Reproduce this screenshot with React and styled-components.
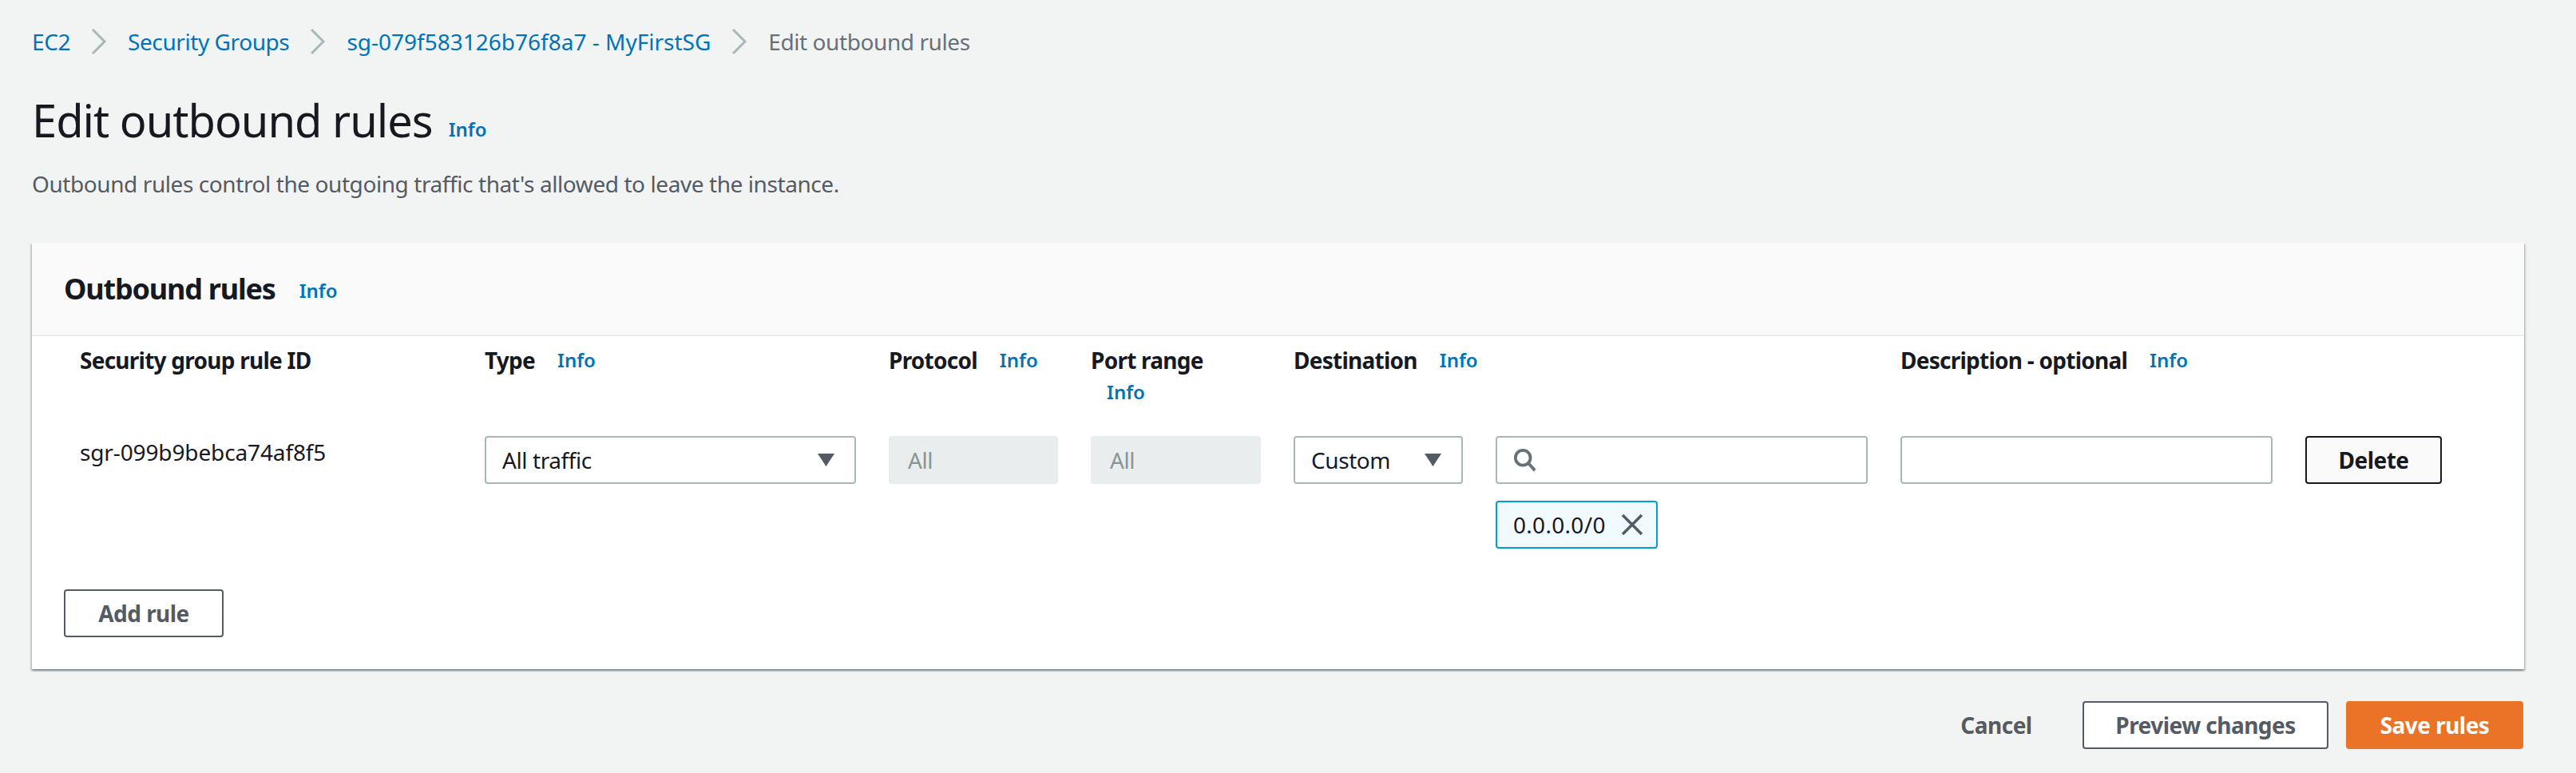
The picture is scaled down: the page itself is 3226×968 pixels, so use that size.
import React from "react";
import styled, { createGlobalStyle } from "styled-components";

const Global = createGlobalStyle`
  html, body { margin: 0; padding: 0; background: #f2f3f3; }
  body { font-family: "Noto Sans", "Liberation Sans", sans-serif; color: #16191f; }
  * { box-sizing: border-box; }
`;

const Page = styled.div`
  width: 3226px;
  height: 968px;
  padding: 0 65px 0 40px;
  background: #f2f3f3;
  overflow: hidden;
`;
const text = `font-size: 28px; letter-spacing: -0.42px; line-height: 40px;`;

const Crumbs = styled.nav`
  display: flex;
  align-items: center;
  height: 40px;
  margin-top: 32px;
  gap: 25px;
  ${text}
`;
const Crumb = styled.a`
  color: ${(p) => (p.$current ? "#687078" : "#0073bb")};
  letter-spacing: ${(p) => (p.$id ? "0" : "-0.42px")};
  white-space: nowrap;
`;
const Chev = styled.svg`
  width: 22px;
  height: 32px;
  flex: none;
`;
const TitleRow = styled.div`
  display: flex;
  align-items: center;
  gap: 20px;
  margin-top: 46px;
`;
const Title = styled.h1`
  margin: 0;
  font-size: 56px;
  font-weight: 400;
  letter-spacing: -1px;
  line-height: 64px;
`;
const Info = styled.a`
  color: #0073bb;
  font-size: 24px;
  font-weight: 600;
  letter-spacing: 0;
  line-height: 40px;
  white-space: nowrap;
  margin-top: ${(p) => p.$drop || 0}px;
`;
const Lead = styled.p`
  margin: 28px 0 0;
  color: #545b64;
  ${text}
`;
const Card = styled.section`
  margin-top: 54px;
  height: 534px;
  background: #fff;
  box-shadow: 0 2px 2px 0 rgba(0, 28, 36, 0.3), 2px 2px 2px 0 rgba(0, 28, 36, 0.15), -2px 2px 2px 0 rgba(0, 28, 36, 0.15);
  display: flex;
  flex-direction: column;
`;
const CardHead = styled.header`
  height: 117px;
  flex: none;
  background: #fafafa;
  border-bottom: 2px solid #eaeded;
  display: flex;
  align-items: center;
  padding-left: 40px;
  gap: 30px;
`;
const CardTitle = styled.h2`
  margin: 0;
  font-size: 36px;
  font-weight: 700;
  letter-spacing: -1.2px;
  line-height: 40px;
`;
const Rules = styled.div`
  display: grid;
  grid-template-columns: 466px 465px 212px 213px 212px 466px 466px 171px;
  column-gap: 41px;
  padding: 10px 0 0 60px;
`;
const HeadCell = styled.div`
  display: flex;
  flex-wrap: ${(p) => (p.$wrap ? "wrap" : "nowrap")};
  align-items: flex-start;
  align-content: flex-start;
  column-gap: 28px;
  height: 115px;
  font-size: 28px;
  font-weight: 700;
  letter-spacing: -0.75px;
  line-height: 40px;
  white-space: nowrap;
`;
const Wrapped = styled(Info)`
  flex-basis: 100%;
  padding-left: 20px;
`;
const RuleId = styled.div`
  ${text}
  letter-spacing: -0.13px;
`;
const Field = styled.div`
  height: 60px;
  border: 2px solid #aab7b8;
  border-radius: 4px;
  background: #fff;
  display: flex;
  align-items: center;
  padding: 0 25px 0 20px;
  justify-content: space-between;
  ${text}
`;
const Disabled = styled(Field)`
  background: #eaeded;
  border-color: #eaeded;
  color: #879596;
  padding-left: 22px;
`;
const Search = styled(Field)`
  justify-content: flex-start;
`;
const Token = styled.div`
  margin-top: 21px;
  width: 203px;
  height: 60px;
  background: #f1faff;
  border: 2px solid #00a1c9;
  border-radius: 4px;
  display: flex;
  align-items: center;
  justify-content: space-between;
  padding: 0 16px 0 20px;
  ${text}
  letter-spacing: 0.3px;
`;
const Button = styled.button`
  width: ${(p) => p.$w || 171}px;
  height: 60px;
  border-radius: 4px;
  font-family: inherit;
  font-size: 28px;
  font-weight: 700;
  letter-spacing: -0.53px;
  padding: 0;
  background: ${(p) => p.$bg || "#fff"};
  border: 2px solid ${(p) => p.$line || "#545b64"};
  color: ${(p) => p.$ink || "#545b64"};
`;
const AddRow = styled.div`
  padding: 0 0 0 40px;
  margin-top: 51px;
`;
const Footer = styled.footer`
  margin-top: 40px;
  padding-right: 1px;
  display: flex;
  justify-content: flex-end;
  align-items: center;
  gap: 22px;
`;
const Ghost = styled(Button)`
  border-color: transparent;
  background: transparent;
`;

const Chevron = () => (
  <Chev viewBox="0 0 22 32" fill="none">
    <path d="M3 1 L18 16 L3 31" stroke="#aab7b8" strokeWidth="3" />
  </Chev>
);
const Caret = () => (
  <svg width="21" height="16" viewBox="0 0 21 16">
    <path d="M0 0 H21 L10.5 16 Z" fill="#545b64" />
  </svg>
);

export default function App() {
  return (
    <Page>
      <Global />
      <Crumbs>
        <Crumb>EC2</Crumb>
        <Chevron />
        <Crumb>Security Groups</Crumb>
        <Chevron />
        <Crumb $id>sg-079f583126b76f8a7 - MyFirstSG</Crumb>
        <Chevron />
        <Crumb $current>Edit outbound rules</Crumb>
      </Crumbs>
      <TitleRow>
        <Title>Edit outbound rules</Title>
        <Info $drop={24}>Info</Info>
      </TitleRow>
      <Lead>Outbound rules control the outgoing traffic that's allowed to leave the instance.</Lead>
      <Card>
        <CardHead>
          <CardTitle>Outbound rules</CardTitle>
          <Info $drop={4}>Info</Info>
        </CardHead>
        <Rules>
          <HeadCell>Security group rule ID</HeadCell>
          <HeadCell>Type <Info>Info</Info></HeadCell>
          <HeadCell>Protocol <Info>Info</Info></HeadCell>
          <HeadCell $wrap>Port range <Wrapped>Info</Wrapped></HeadCell>
          <HeadCell>Destination <Info>Info</Info></HeadCell>
          <HeadCell />
          <HeadCell>Description - optional <Info>Info</Info></HeadCell>
          <HeadCell />

          <RuleId>sgr-099b9bebca74af8f5</RuleId>
          <Field>
            All traffic
            <Caret />
          </Field>
          <Disabled>All</Disabled>
          <Disabled>All</Disabled>
          <Field>
            Custom
            <Caret />
          </Field>
          <div>
            <Search>
              <svg width="30" height="30" viewBox="0 0 32 32" fill="none">
                <circle cx="13" cy="13" r="10" stroke="#687078" strokeWidth="4" />
                <path d="M20 20 L29 30" stroke="#687078" strokeWidth="4" />
              </svg>
            </Search>
            <Token>
              0.0.0.0/0
              <svg width="28" height="28" viewBox="0 0 28 28" fill="none">
                <path d="M2 2 L26 26 M26 2 L2 26" stroke="#545b64" strokeWidth="3.5" />
              </svg>
            </Token>
          </div>
          <Field />
          <Button $bg="#fafafa" $line="#16191f" $ink="#16191f">Delete</Button>
        </Rules>
        <AddRow>
          <Button $w={200}>Add rule</Button>
        </AddRow>
      </Card>
      <Footer>
        <Ghost $w={172}>Cancel</Ghost>
        <Button $w={308}>Preview changes</Button>
        <Button $w={222} $bg="#eb7327" $line="#eb7327" $ink="#fff">Save rules</Button>
      </Footer>
    </Page>
  );
}
